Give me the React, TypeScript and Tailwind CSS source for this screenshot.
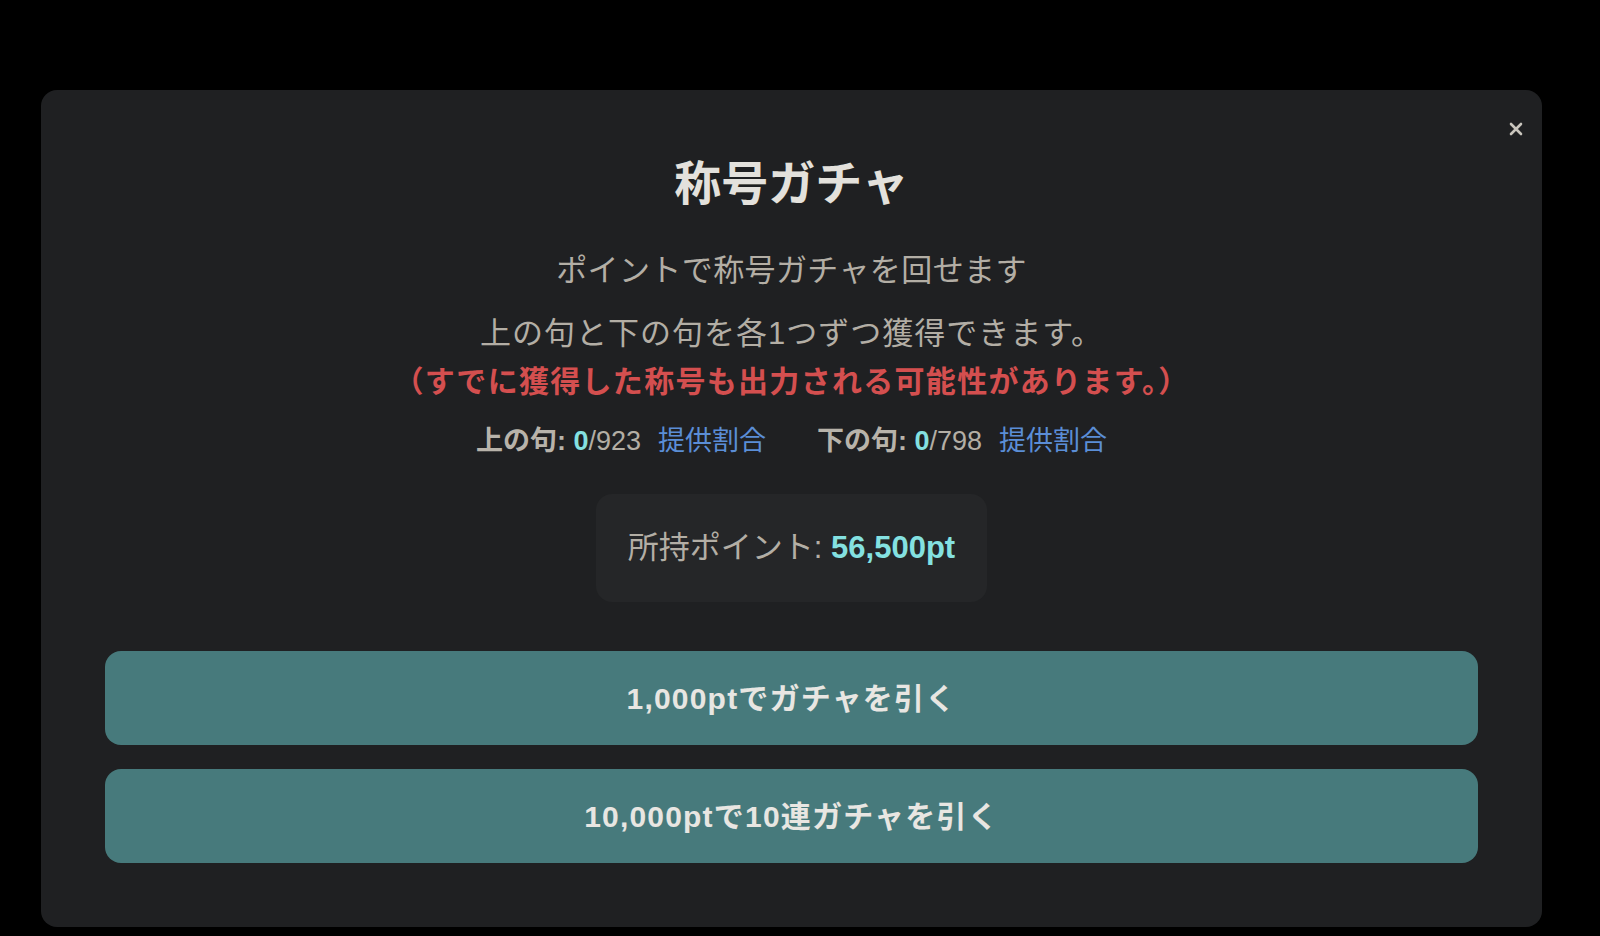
import { useState } from 'react'

const FONT = "font-['Liberation_Sans','Noto_Sans_CJK_JP',sans-serif]"

const stats = [
  { label: '上の句', got: 0, total: 923 },
  { label: '下の句', got: 0, total: 798 },
]

export default function App() {
  const [points] = useState(56500)

  return (
    <div className={`min-h-screen bg-black pt-[90px] ${FONT}`}>
      <div className="relative ml-[41px] w-[1501px] rounded-2xl bg-[#1f2022] px-16 pt-[66px] pb-16">
        {/* 閉じる */}
        <button className="absolute right-[19px] top-[32px] flex h-[14px] w-[14px] items-center justify-center text-[#c9c5bd]">
          <svg width="14" height="14" viewBox="0 0 14 14" fill="none" stroke="currentColor" strokeWidth="2.6" strokeLinecap="round">
            <path d="M2 2 L12 12 M12 2 L2 12" />
          </svg>
        </button>

        <h2 className="text-center text-[47px] leading-[56px] font-bold text-[#e3e1dc]">称号ガチャ</h2>

        <p className="mt-[35px] text-center text-[31px] leading-[48px] tracking-[0.4px] text-[#b3aea5]">
          ポイントで称号ガチャを回せます
        </p>

        <p className="mt-[15px] text-center text-[31px] leading-[48px] tracking-[1px] text-[#b3aea5]">
          上の句と下の句を各1つずつ獲得できます。
          <br />
          <span className="text-[30px] font-bold tracking-[1.3px] text-[#d44f4f]">（すでに獲得した称号も出力される可能性があります。）</span>
        </p>

        {/* 取得状況 */}
        <div className="mt-[15px] flex items-center justify-center gap-[51px] text-[27px] leading-[40px]">
          {stats.map((s) => (
            <div key={s.label} className="flex items-center gap-[17px]">
              <span className="text-[#b3aea5]">
                <span className="font-bold text-[#b8b3aa]">{s.label}: </span>
                <span className="font-bold text-[#84e1e1]">{s.got}</span>/{s.total}
              </span>
              <a className="cursor-pointer text-[#5b8ed6]">提供割合</a>
            </div>
          ))}
        </div>

        {/* 所持ポイント */}
        <div className="mt-[33px] flex justify-center">
          <div className="rounded-2xl bg-[#252628] px-[32px] py-[31px] text-[31px] leading-[46px] text-[#b3aea5]">
            所持ポイント: <span className="font-bold text-[#84e1e1]">{points.toLocaleString()}pt</span>
          </div>
        </div>

        {/* ガチャボタン */}
        <div className="mt-[49px] flex flex-col gap-6">
          <button className="h-[94px] w-full rounded-2xl bg-[#477a7c] text-[30px] font-bold tracking-[1.2px] text-[#e8e6e2]">
            1,000ptでガチャを引く
          </button>
          <button className="h-[94px] w-full rounded-2xl bg-[#477a7c] text-[30px] font-bold tracking-[1.2px] text-[#e8e6e2]">
            10,000ptで10連ガチャを引く
          </button>
        </div>
      </div>
    </div>
  )
}
